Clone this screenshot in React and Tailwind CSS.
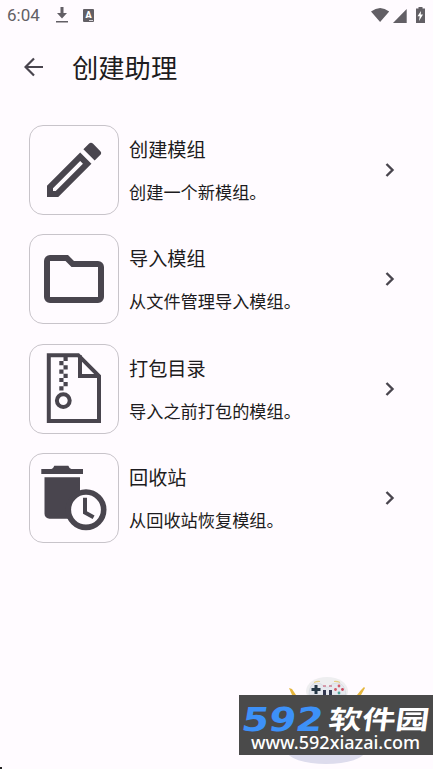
import clsx from "clsx";

const PencilIcon = () => (
  <svg viewBox="0 0 24 24" className="size-[72px]" fill="currentColor">
    <path d="M3 17.25V21h3.75L17.81 9.94l-3.75-3.75L3 17.25zM5.92 19H5v-.92l9.06-9.06.92.92L5.92 19zM20.71 7.04a1 1 0 0 0 0-1.41l-2.34-2.34a1 1 0 0 0-1.41 0l-1.83 1.83 3.75 3.75 1.83-1.83z" />
  </svg>
);

const FolderIcon = () => (
  <svg viewBox="0 0 24 24" className="size-[72px]" fill="currentColor">
    <path d="M4 20q-.825 0-1.412-.587T2 18V6q0-.825.588-1.412T4 4h6l2 2h8q.825 0 1.413.588T22 8v10q0 .825-.587 1.413T20 20Zm0-2h16V8h-8.825l-2-2H4Z" />
  </svg>
);

const ZipIcon = () => (
  <svg viewBox="0 0 90 90" className="size-[90px]" fill="currentColor">
    <path
      d="M19.8 11.2H49.2L70 32V77H19.8ZM51 11.2V32H70"
      fill="none"
      stroke="currentColor"
      strokeWidth="4"
    />
    <path d="M34.5 13h4.2v4.1h-4.2zM30.3 17.1h4.2v4.2h-4.2zM34.5 21.3h4.2v4.2h-4.2zM30.3 25.5h4.2v4.2h-4.2zM34.5 29.7h4.2v4.2h-4.2zM30.3 33.9h4.2v4.2h-4.2zM34.5 38.1h4.2v4.2h-4.2zM30.3 42.3h4.2v4.2h-4.2z" />
    <circle cx="34.3" cy="56.6" r="6.4" fill="none" stroke="currentColor" strokeWidth="4" />
  </svg>
);

const TrashClockIcon = () => (
  <svg viewBox="0 0 90 90" className="size-[90px]" fill="currentColor">
    <path d="M12.3 16h10.2q1.5 0 2.8-3.3h14q1.3 3.3 3 3.3H54v5H12.3zM15.5 24.2H51v41.5H20.5a5 5 0 0 1-5-5z" />
    <circle cx="57" cy="56.7" r="17.7" fill="#fffbff" stroke="currentColor" strokeWidth="5.6" />
    <path d="M56 44.7v14.8l8.6 4.7" fill="none" stroke="currentColor" strokeWidth="4" />
  </svg>
);

const items = [
  { title: "创建模组", text: "创建一个新模组。", icon: PencilIcon },
  { title: "导入模组", text: "从文件管理导入模组。", icon: FolderIcon },
  { title: "打包目录", text: "导入之前打包的模组。", icon: ZipIcon },
  { title: "回收站", text: "从回收站恢复模组。", icon: TrashClockIcon },
];

const StatusBar = () => (
  <div className="flex h-[30px] items-center pr-[6px] pl-[7px] text-[#625f65]">
    <span className="w-[49px] font-[Roboto] text-[17px] leading-none">6:04</span>
    <svg viewBox="0 0 12 16" className="h-4 w-3" fill="currentColor">
      <path d="M4.5 0h3v6H11l-5 5.4L1 6h3.5zM0 14h12v1.5H0z" />
    </svg>
    <div className="relative ml-[15px] flex h-[13px] w-[11px] items-center justify-center rounded-[1px] bg-[#625f65]">
      <span className="font-[Roboto] text-[9px] leading-none font-black text-white">A</span>
      <span className="absolute right-px bottom-px h-px w-1 bg-[#d8d5da]" />
    </div>
    <svg viewBox="0 0 56 16" className="mb-px ml-auto h-4 w-14" fill="currentColor">
      <path d="M0 4.5Q9.2-2.7 18.2 4.5L9.1 15zM22 16 35.7 2v14zM47.5 0h4v1.5H54V16h-9V1.5h2.5z" />
      <path d="M50 4 46.5 9.3h2.2L48 14l4-6.5h-2.3z" fill="#fff" />
    </svg>
  </div>
);

const Item = ({ icon: Icon, title, text }) => (
  <div className="flex h-[90px] items-center">
    <div className="flex size-[90px] shrink-0 items-center justify-center rounded-[14px] border border-[#c8c4ca] text-[#49454e]">
      <div className="-m-px">
        <Icon />
      </div>
    </div>
    <div className="ml-[10px] flex flex-col gap-[17px] pb-px whitespace-nowrap">
      <h2 className="text-[19.2px] leading-7">{title}</h2>
      <p className="text-[17.2px] leading-6">{text}</p>
    </div>
    <svg viewBox="0 0 10 16" className="mr-[38px] ml-auto h-4 w-[10px] text-[#49454e]" fill="none">
      <path d="m1.5 2 6 6-6 6" stroke="currentColor" strokeWidth="2.4" />
    </svg>
  </div>
);

const Robot = () => (
  <svg viewBox="0 0 90 90" className="absolute top-[675px] left-[281px] h-[90px] w-[90px]">
    <ellipse cx="45" cy="76" rx="39" ry="13" fill="#dddced" />
    <ellipse cx="46" cy="16" rx="21" ry="14" fill="#eeeef0" />
    <path d="M28 20q0-12 8-12 5 0 7 4h5q2-4 8-4 8 0 9 12z" fill="#e6e9ef" stroke="#d4d8e0" strokeWidth=".7" />
    <path d="M33 7.500q3-1.500 6-1M53 6.500q3-.5 6 1" fill="none" stroke="#e6cf85" strokeWidth="1.2" />
    <path d="M33.500 10h3v3h3v3h-3v3h-3v-3h-3v-3h3z" fill="#263846" />
    <path d="M42 10.500h3v1h-3zM48 10.500h3v1h-3z" fill="#c04b68" />
    <path d="M42 15h3v5h-3zM48 15h3v5h-3z" fill="#343950" />
    <circle cx="58" cy="11" r="1.4" fill="#d45c6b" />
    <circle cx="54.500" cy="14.500" r="1.4" fill="#d45c6b" />
    <circle cx="61.500" cy="14.500" r="1.4" fill="#ca4459" />
    <circle cx="58" cy="18" r="1.4" fill="#4ba39b" />
    <path d="m8 13 3 1 2 3 2 3h-4zM83 12l-3 3-4 5h4l4-7z" fill="#e5b63d" />
  </svg>
);

const Watermark = () => (
  <div className="absolute top-[695px] right-0 h-[60px] w-[194px] bg-[#4a4a4a] whitespace-nowrap">
    <span className="absolute top-[9px] left-[3px] origin-left scale-x-[1.18] -skew-x-8 font-['DejaVu_Sans'] text-[33px] leading-8 font-bold text-[#3d91f8]">
      592
    </span>
    <span className="absolute top-[7px] left-[90px] origin-left scale-x-[1.29] -skew-x-6 text-[26px] leading-8 font-bold text-white">
      软件园
    </span>
    <span className="absolute top-[37px] left-[12px] font-['Noto_Sans'] text-[18px] leading-5 font-medium text-white">
      www.592xiazai.com
    </span>
  </div>
);

export default function App() {
  return (
    <main
      className={clsx(
        "relative h-[769px] w-[433px] overflow-hidden bg-[#fffbff] text-[#1d1b20]",
        "font-['Noto_Sans_CJK_SC',sans-serif]"
      )}
    >
      <StatusBar />
      <header className="flex h-[75px] items-center pb-[2px] pl-6">
        <svg viewBox="0 0 20 20" className="size-5 text-[#49454e]" fill="none">
          <path d="M19 10H2M10 1.5 1.5 10l8.5 8.5" stroke="currentColor" strokeWidth="2.2" />
        </svg>
        <h1 className="ml-[28px] text-[26.3px] leading-9">创建助理</h1>
      </header>
      <section className="flex flex-col gap-[19.4px] pt-5 pl-[29px]">
        {items.map((item) => (
          <Item key={item.title} {...item} />
        ))}
      </section>
      <Robot />
      <Watermark />
      <span className="absolute bottom-0 left-0 size-[2px] bg-[#222]" />
    </main>
  );
}
